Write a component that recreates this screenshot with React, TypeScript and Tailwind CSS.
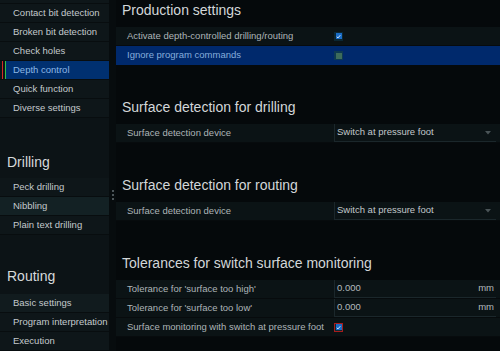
import React from 'react'

const font = { fontFamily: '"Liberation Sans", Arial, sans-serif' }

type NavItem = { label: string; state?: 'selected' | 'hover' | 'soft' }

function NavRow({ item }: { item: NavItem }) {
  if (item.state === 'selected') {
    return (
      <div className="flex h-[19px] border-b border-[#080d0f]">
        <div className="w-[2px]" />
        <div className="w-[1px] bg-[#d42a2a]" />
        <div className="w-[2px]" />
        <div className="w-[1px] bg-[#2ec24a]" />
        <div className="flex flex-1 items-center bg-[#003070] pl-[7px] text-[9.5px] text-[#8db8e6]">
          {item.label}
        </div>
      </div>
    )
  }
  const bg =
    item.state === 'hover' ? 'bg-[#132124]' : item.state === 'soft' ? 'bg-[#111b1e]' : 'bg-[#0e1619]'
  return (
    <div className={`flex h-[19px] items-center border-b border-[#080d0f] pl-[13px] text-[9.5px] text-[#c4cacd] ${bg}`}>
      {item.label}
    </div>
  )
}

function Checkbox({ checked, tone }: { checked: boolean; tone?: 'onBlue' | 'error' }) {
  const outer =
    tone === 'error'
      ? 'bg-[#0b2733] border border-[#a81c1c]'
      : tone === 'onBlue'
        ? 'bg-[#0d3a52]'
        : 'bg-[#0b2733]'
  return (
    <div className={`flex h-[9px] w-[9px] items-center justify-center ${outer}`}>
      <div className={`flex h-[6px] w-[6px] items-center justify-center ${checked ? 'bg-[#1a6cc6]' : 'bg-[#3d6c5b]'}`}>
        {checked && (
          <svg width="5" height="5" viewBox="0 0 5 5">
            <path d="M0.8 2.8 L2 3.9 L4.3 1.2" stroke="#e6f0fa" strokeWidth="0.9" fill="none" />
          </svg>
        )}
      </div>
    </div>
  )
}

function Dropdown({ value }: { value: string }) {
  return (
    <div className="flex h-[18px] flex-1 items-center justify-between border-b border-l border-[#1b272b] pl-[2px] pr-[5px] text-[9.5px] text-[#c2c8cb]">
      <span>{value}</span>
      <svg width="6" height="4" viewBox="0 0 6 4">
        <path d="M0 0 H6 L3 3.5 Z" fill="#4a5457" />
      </svg>
    </div>
  )
}

function NumberField({ value, unit }: { value: string; unit: string }) {
  return (
    <div className="flex h-[18px] flex-1 items-center justify-between border-b border-l border-[#1b272b] pl-[2px] pr-[2px] text-[9.5px] text-[#b3babd]">
      <span>{value}</span>
      <span>{unit}</span>
    </div>
  )
}

function Row({ label, children, selected }: { label: string; children: React.ReactNode; selected?: boolean }) {
  return (
    <div className={`flex h-[19px] items-center ${selected ? 'bg-[#00296c]' : 'bg-[#0b1315] border-b border-[#070b0d]'}`}>
      <div className={`w-[218px] pl-[11px] text-[9.5px] ${selected ? 'text-[#86aedc]' : 'text-[#adb5b8]'}`}>{label}</div>
      <div className="flex flex-1 items-center pr-[4px]">{children}</div>
    </div>
  )
}

function SectionTitle({ title }: { title: string }) {
  return (
    <div className="flex h-[59px] items-end pb-[7px] pl-[6px] text-[14px] leading-[20px] text-[#d3d7d9]">
      {title}
    </div>
  )
}

export default function App() {
  const general: NavItem[] = [
    { label: 'Contact bit detection' },
    { label: 'Broken bit detection' },
    { label: 'Check holes' },
    { label: 'Depth control', state: 'selected' },
    { label: 'Quick function' },
    { label: 'Diverse settings' },
  ]
  const drilling: NavItem[] = [
    { label: 'Peck drilling' },
    { label: 'Nibbling', state: 'hover' },
    { label: 'Plain text drilling' },
  ]
  const routing: NavItem[] = [
    { label: 'Basic settings', state: 'soft' },
    { label: 'Program interpretation' },
    { label: 'Execution' },
  ]

  return (
    <div className="flex h-[351px] w-[500px] overflow-hidden bg-[#05090b]" style={font}>
      {/* Sidebar */}
      <aside className="flex w-[109px] flex-col bg-[#0c1316]">
        <div className="h-[4px] border-b border-[#080d0f] bg-[#0e1619]" />
        {general.map((item) => (
          <NavRow key={item.label} item={item} />
        ))}
        <div className="flex h-[60px] items-end pb-[6px] pl-[7px] text-[14px] leading-[20px] text-[#d6dadc]">Drilling</div>
        {drilling.map((item) => (
          <NavRow key={item.label} item={item} />
        ))}
        <div className="flex h-[59px] items-end pb-[8px] pl-[7px] text-[14px] leading-[20px] text-[#d6dadc]">Routing</div>
        {routing.map((item) => (
          <NavRow key={item.label} item={item} />
        ))}
      </aside>

      {/* Splitter */}
      <div className="flex w-[7px] flex-col items-center gap-[2px] bg-[#070c0e] pt-[190px]">
        <div className="h-[2px] w-[2px] bg-[#4c5559]" />
        <div className="h-[2px] w-[2px] bg-[#4c5559]" />
        <div className="h-[2px] w-[2px] bg-[#4c5559]" />
      </div>

      {/* Main content */}
      <main className="mt-[-32px] flex flex-1 flex-col">
        <SectionTitle title="Production settings" />
        <Row label="Activate depth-controlled drilling/routing">
          <Checkbox checked />
        </Row>
        <Row label="Ignore program commands" selected>
          <Checkbox checked={false} tone="onBlue" />
        </Row>

        <SectionTitle title="Surface detection for drilling" />
        <Row label="Surface detection device">
          <Dropdown value="Switch at pressure foot" />
        </Row>

        <SectionTitle title="Surface detection for routing" />
        <Row label="Surface detection device">
          <Dropdown value="Switch at pressure foot" />
        </Row>

        <SectionTitle title="Tolerances for switch surface monitoring" />
        <Row label="Tolerance for 'surface too high'">
          <NumberField value="0.000" unit="mm" />
        </Row>
        <Row label="Tolerance for 'surface too low'">
          <NumberField value="0.000" unit="mm" />
        </Row>
        <Row label="Surface monitoring with switch at pressure foot">
          <Checkbox checked tone="error" />
        </Row>
      </main>
    </div>
  )
}
